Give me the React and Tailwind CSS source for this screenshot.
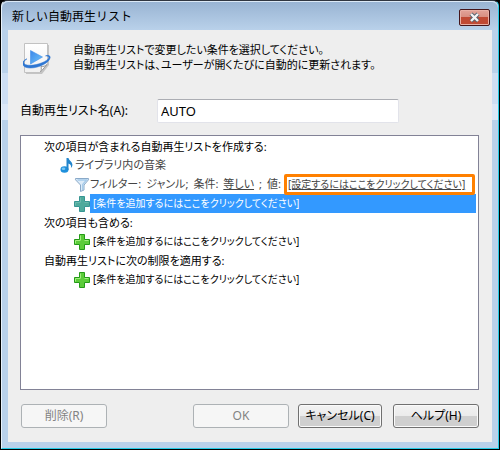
function PlaylistIcon() {
  return (
    <svg className="h-8 w-8 shrink-0" viewBox="0 0 32 32" aria-hidden="true">
      <defs>
        <linearGradient id="play" x1="0" y1="0" x2="1" y2="1">
          <stop offset="0" stopColor="#3b86e8" />
          <stop offset="1" stopColor="#6fc6fb" />
        </linearGradient>
        <linearGradient id="sheet" x1="0" y1="0" x2="0" y2="1">
          <stop offset="0" stopColor="#ffffff" />
          <stop offset="1" stopColor="#f0f0f0" />
        </linearGradient>
      </defs>
      <path d="M3 3h23v20l-7 9H3z" fill="#a8a8a8" opacity="0.6" />
      <path d="M1.500 1.500h23V22l-6 8.500h-17z" fill="url(#sheet)" stroke="#c2c2c2" />
      <path d="M24 22.500l-6.500 7.500c1-2 1-3.500.5-5.500 2.300.3 4.500-.5 6-2z" fill="#fff" stroke="#999" />
      <path
        d="M4 16.800C-.5 19.500-.8 23.300 7 23.300c8 0 17.500-4.300 18.800-7.300.5-1.500-1-2.200-3.300-2.100 1.500-.9 4.800-.8 4.700 1.500C26.900 20.200 16.500 26 7.500 26-2.500 26-2 18.800 4 16.800z"
        fill="#2e76d2"
        stroke="#2e76d2"
        strokeWidth="0.500"
      />
      <path d="M7.500 8.500L19.500 15l-12 7z" fill="url(#play)" stroke="#3f8eea" strokeWidth="0.600" />
    </svg>
  );
}

function NoteIcon() {
  return (
    <svg className="h-4 w-4 shrink-0" viewBox="0 0 16 16" aria-hidden="true">
      <ellipse cx="5.500" cy="11.500" rx="4" ry="3.300" fill="#1e90dc" />
      <ellipse cx="4.500" cy="10.700" rx="1.800" ry="1.200" fill="#7cc8f5" />
      <path
        d="M7.500 0h2c.2 2.500 3.700 3.200 3.900 6.500.1 1.500-.5 2.700-1.500 3.500.6-2.500-.4-3.700-2.400-4.500v6.500h-2z"
        fill="#2385cc"
      />
    </svg>
  );
}

function FilterIcon() {
  return (
    <svg className="h-4 w-4 shrink-0" viewBox="0 0 16 16" aria-hidden="true">
      <path
        d="M1.500 1.500h13v1.300L10 8v5l-3.500 1.500V8l-5-5.200z"
        fill="#dcebf8"
        stroke="#8aa9c8"
      />
      <path d="M3.500 3h9L8.700 7.500v5.500" fill="none" stroke="#a5cbea" strokeWidth="1.300" />
    </svg>
  );
}

function PlusIcon({ selected }) {
  return (
    <svg className="h-4 w-4 shrink-0" viewBox="0 0 16 16" aria-hidden="true">
      <path
        d="M5.500.5h5v5h5v5h-5v5h-5v-5h-5v-5h5z"
        fill={selected ? "#4faa9c" : "#5ccc3a"}
        stroke={selected ? "#379593" : "#249a17"}
        strokeLinejoin="round"
      />
      <path
        d="M6.500 6V1.500M1.500 9.500v-3h5M10.500 6.500h4"
        fill="none"
        stroke={selected ? "#6bb9ac" : "#a2ef7f"}
      />
    </svg>
  );
}

function CloseButton() {
  return (
    <button
      type="button"
      aria-label="閉じる"
      className="flex h-[17px] w-[31px] items-center justify-center rounded-xs border border-[#45161b] bg-linear-to-b from-[#e3a499] from-0% via-[#d88f82] via-45% to-[#d47c66] shadow-[inset_0_0_0_1px_#e9b0a5,inset_0_-8px_0_0_#c04a34]"
    >
      <svg className="h-[11px] w-[13px]" viewBox="0 0 13 11" aria-hidden="true">
        <path d="M3 2l7 7M10 2l-7 7" stroke="#57636f" strokeWidth="4.200" />
        <path d="M3 2l7 7M10 2l-7 7" stroke="#f4f4f4" strokeWidth="2.400" />
      </svg>
    </button>
  );
}

function AddRow({ selected }) {
  return (
    <li className="flex h-[19px] items-center pl-[53px]">
      <PlusIcon selected={selected} />
      <button
        type="button"
        className={
          selected
            ? "h-[19px] flex-1 bg-[#3399ff] pl-[3px] text-left text-[10px] text-white"
            : "h-[19px] flex-1 pl-[3px] text-left text-[10px]"
        }
      >
        [条件を追加するにはここをクリックしてください]
      </button>
    </li>
  );
}

function DialogButton({ children, disabled, className }) {
  return (
    <button
      type="button"
      disabled={disabled}
      className={`h-6 rounded-[3px] border ${
        disabled
          ? "border-[#adb2b5] bg-[#f6f6f6] text-[#838383]"
          : "border-[#707070] bg-linear-to-b from-[#f2f2f2] from-0% via-[#ebebeb] via-50% to-[#cfcfcf] to-50% shadow-[inset_0_0_0_1px_#fafafa]"
      } ${className}`}
    >
      {children}
    </button>
  );
}

export default function App() {
  return (
    <div className="bg-black px-px pb-px font-['Noto_Sans','Noto_Sans_CJK_JP',sans-serif] text-xs text-black">
      {/* the glass frame has a lighter reflection partway down its sides */}
      <div className="flex min-h-[449px] flex-col rounded-t-md border-t border-r border-b border-l border-t-[#303640] border-r-[#25cbe6] border-b-[#25cbe6] border-l-[#e8f2fb] bg-[linear-gradient(#b9d1ea_72px,#cddef3_72px,#cddef3_103px,#dbe7f7_103px,#dbe7f7_119px,#b9d1ea_119px)] px-1.5 pb-1.5">
        <header className="-mx-1.5 flex h-[29px] items-center justify-between rounded-t-md bg-linear-to-b from-[#98b3d2] to-[#b9d1ea] pr-2 pl-2.5 pt-1.5 pb-[3px] shadow-[inset_0_1px_0_0_#dce9f6]">
          <h1>新しい自動再生リスト</h1>
          <CloseButton />
        </header>

        <main className="flex flex-1 flex-col bg-[#eeeeee] pt-3 pr-[13px] pb-3.5 pl-3 [font-feature-settings:'palt']">
          <div className="flex gap-[18px] pl-[3px]">
            <PlaylistIcon />
            <div className="text-[11px] leading-[15px]">
              <p>自動再生リストで変更したい条件を選択してください。</p>
              <p>自動再生リストは、ユーザーが開くたびに自動的に更新されます。</p>
            </div>
          </div>

          <div className="mt-[25px] flex items-center">
            <label htmlFor="list-name" className="w-[137px]">
              自動再生リスト名(A):
            </label>
            <input
              id="list-name"
              type="text"
              defaultValue="AUTO"
              className="h-6 w-[242px] rounded-xs border border-[#e2e3ea] border-t-[#abadb3] bg-white px-[3px] text-[13px] outline-none"
            />
          </div>

          <ul className="mt-3 min-h-[254px] flex-1 border border-[#828296] bg-white py-px pr-0.5 text-[11px]">
            <li className="h-[19px] pl-[23px] leading-[19px]">
              次の項目が含まれる自動再生リストを作成する:
            </li>
            <li className="flex h-[19px] items-center pl-[38px] text-[#444444]">
              <NoteIcon />
              ライブラリ内の音楽
            </li>
            <li className="relative flex h-[19px] items-center pr-px pl-[53px] whitespace-nowrap text-[#444444]">
              <FilterIcon />
              <div className="mr-[3px] flex flex-1 justify-between">
                <span>フィルター:</span>
                <span>ジャンル;</span>
                <span>条件:</span>
                <a href="#operator" className="underline">
                  等しい
                </a>
                <span>;</span>
                <span>値:</span>
              </div>
              <a
                href="#value"
                className="w-[191px] rounded-xs border-3 border-[#ff8000] pl-px text-[10px] leading-[15px] underline"
              >
                [設定するにはここをクリックしてください]
              </a>
            </li>
            <AddRow selected />
            <li className="h-[19px] pl-[23px] leading-[19px]">次の項目も含める:</li>
            <AddRow />
            <li className="h-[19px] pl-[23px] leading-[19px]">
              自動再生リストに次の制限を適用する:
            </li>
            <AddRow />
          </ul>

          <footer className="mt-3.5 flex pl-px">
            <DialogButton disabled className="w-[86px]">
              削除(R)
            </DialogButton>
            <DialogButton disabled className="ml-auto w-24">
              OK
            </DialogButton>
            <DialogButton className="ml-[9px] w-[84px]">キャンセル(C)</DialogButton>
            <DialogButton className="ml-[11px] w-[86px]">ヘルプ(H)</DialogButton>
          </footer>
        </main>
      </div>
    </div>
  );
}
